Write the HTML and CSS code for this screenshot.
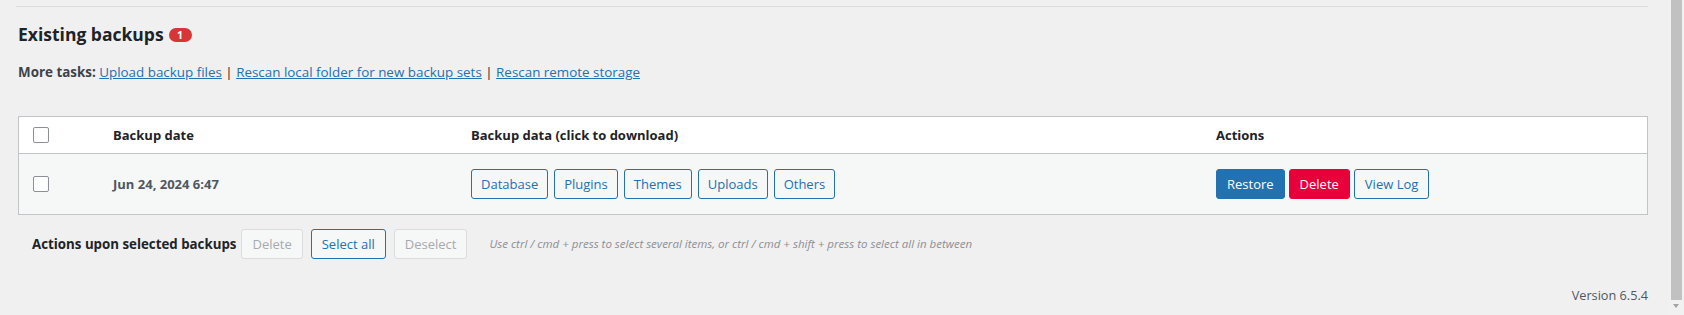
FILE: index.html
```html
<!DOCTYPE html>
<html lang="en">
<head>
<meta charset="utf-8">
<title>Existing backups</title>
<link rel="stylesheet" href="styles.css">
</head>
<body>
<main class="wrap">
  <hr class="rule">
  <h2 class="title">Existing backups <span class="badge">1</span></h2>
  <p class="tasks"><strong>More tasks:</strong> <a href="#">Upload backup files</a> | <a href="#">Rescan local folder for new backup sets</a> | <a href="#">Rescan remote storage</a></p>

  <div class="table">
    <div class="row head">
      <div class="cell check"><span class="box"></span></div>
      <div class="cell">Backup date</div>
      <div class="cell">Backup data (click to download)</div>
      <div class="cell">Actions</div>
    </div>
    <div class="row item">
      <div class="cell check"><span class="box"></span></div>
      <div class="cell date">Jun 24, 2024 6:47</div>
      <div class="cell buttons">
        <button class="btn">Database</button>
        <button class="btn">Plugins</button>
        <button class="btn">Themes</button>
        <button class="btn">Uploads</button>
        <button class="btn">Others</button>
      </div>
      <div class="cell buttons actions">
        <button class="btn primary">Restore</button>
        <button class="btn danger">Delete</button>
        <button class="btn">View Log</button>
      </div>
    </div>
  </div>

  <div class="bulk">
    <span class="bulk-label">Actions upon selected backups</span>
    <button class="btn disabled">Delete</button>
    <button class="btn">Select all</button>
    <button class="btn disabled">Deselect</button>
    <em class="hint">Use ctrl / cmd + press to select several items, or ctrl / cmd + shift + press to select all in between</em>
  </div>

  <div class="version">Version 6.5.4</div>
</main>

<div class="scrollbar"><div class="thumb"></div><div class="arrow"></div></div>
</body>
</html>
```

FILE: styles.css
```css
html, body {
  margin: 0;
  padding: 0;
  background: #f0f0f1;
  overflow: hidden;
}

body {
  font-family: "Open Sans", "Noto Sans", sans-serif;
  font-size: 13px;
  line-height: 20px;
  color: #1d2327;
}

.wrap {
  width: 1630px;
  padding: 6px 0 0 18px;
}

.rule {
  margin: 0 0 0 -2px;
  border: 0;
  border-top: 1px solid #dcdcde;
  height: 0;
}

.title {
  margin: 15px 0 0;
  font-size: 17.5px;
  line-height: 24px;
  font-weight: 700;
  display: flex;
  align-items: center;
  gap: 5px;
}

.badge {
  display: inline-flex;
  align-items: center;
  justify-content: center;
  width: 23px;
  height: 14px;
  border-radius: 7px;
  background: #d63638;
  color: #fff;
  font-size: 10.5px;
  font-weight: 700;
  line-height: 14px;
  margin-top: 1px;
}

.tasks {
  margin: 16px 0 0;
  font-size: 13.4px;
}

.tasks strong {
  color: #3c434a;
}

.tasks a {
  color: #2271b1;
  text-decoration: underline;
}

.table {
  margin-top: 34px;
  border: 1px solid #c3c4c7;
  background: #fff;
}

.row {
  display: grid;
  grid-template-columns: 84px 358px 745px 1fr;
  align-items: center;
}

.row.head {
  height: 36px;
  border-bottom: 1px solid #c3c4c7;
  font-weight: 700;
}

.row.item {
  height: 60px;
  background: #f6f7f7;
}

.cell {
  padding: 0 10px;
}

.cell.check {
  padding-left: 14px;
  display: flex;
  align-items: center;
}

.box {
  display: block;
  width: 14px;
  height: 14px;
  border: 1px solid #8c8f94;
  border-radius: 2px;
  background: #fff;
}

.date {
  font-weight: 700;
  color: #50575e;
}

.buttons {
  display: flex;
  gap: 6px;
}

.buttons.actions {
  gap: 4px;
}

.btn {
  font-family: inherit;
  font-size: 13px;
  height: 30px;
  padding: 0 9px;
  border: 1px solid #2271b1;
  border-radius: 3px;
  background: #f6f7f7;
  color: #2271b1;
  cursor: pointer;
}

.btn.primary {
  background: #2271b1;
  color: #fff;
  padding: 0 10px;
}

.btn.danger {
  background: #e8003a;
  border-color: #e8003a;
  color: #fff;
  padding: 0 10px;
}

.actions .btn:last-child {
  padding: 0 10px;
}

.btn.disabled {
  border-color: #dcdcde;
  color: #a7aaad;
  background: #f6f7f7;
}

.bulk {
  margin-top: 14px;
  padding-left: 14px;
  display: flex;
  align-items: center;
  gap: 8px;
}

.bulk .btn {
  padding: 0 10px;
}

.bulk-label {
  font-weight: 700;
  font-size: 13.3px;
  color: #1d2327;
  margin-right: -3px;
}

.hint {
  margin-left: 14px;
  font-size: 11.5px;
  color: #8c8f94;
}

.version {
  margin-top: 26px;
  text-align: right;
  font-size: 12.7px;
  color: #50575e;
}

.scrollbar {
  position: fixed;
  top: 0;
  right: 0;
  width: 16px;
  height: 315px;
  background: #f1f1f1;
}

.thumb {
  position: absolute;
  left: 3px;
  top: 0;
  width: 11px;
  height: 300px;
  background: #c1c1c1;
}

.arrow {
  position: absolute;
  left: 5px;
  top: 304px;
  width: 0;
  height: 0;
  border-left: 3px solid transparent;
  border-right: 3px solid transparent;
  border-top: 4px solid #a3a3a3;
}
```
